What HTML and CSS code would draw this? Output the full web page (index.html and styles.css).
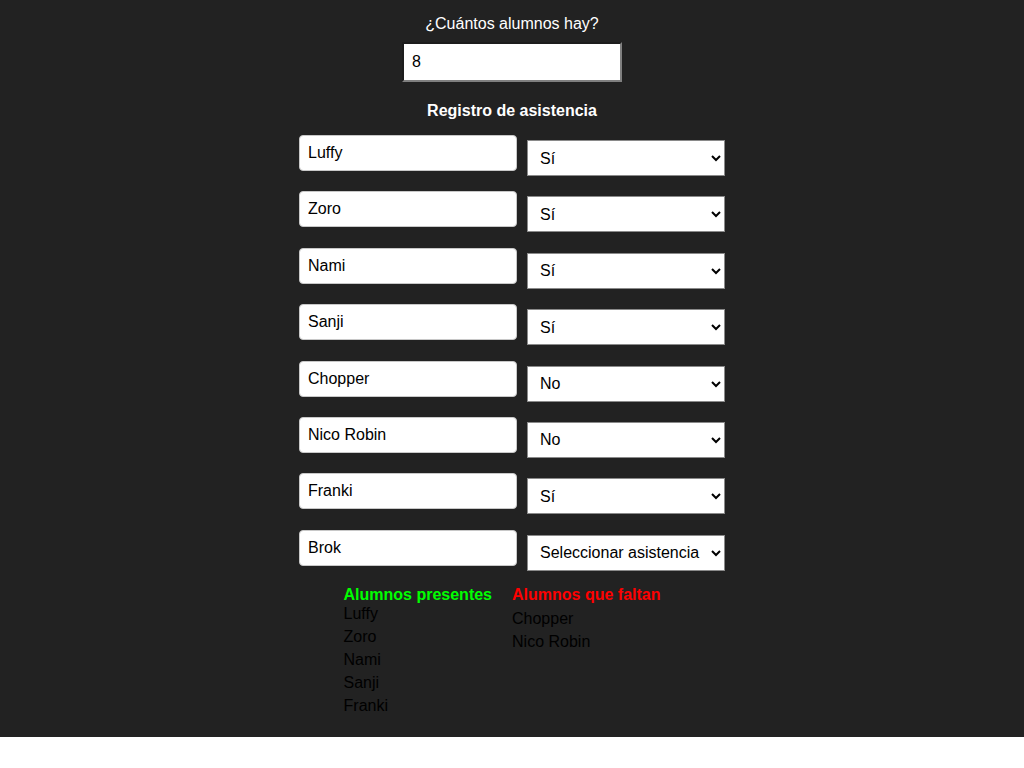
FILE: index.html
```html
<!DOCTYPE html>
<html lang="es">
<head>
<meta charset="utf-8">
<title>Registro de asistencia</title>
<link rel="stylesheet" href="styles.css">
</head>
<body>
<div class="app">
  <p class="question">¿Cuántos alumnos hay?</p>
  <input class="count" type="number" value="8">
  <h2 class="title">Registro de asistencia</h2>
  <div class="rows">
    <div class="row"><input class="name" type="text" value="Luffy"><select class="att"><option>Seleccionar asistencia</option><option selected>Sí</option><option>No</option></select></div>
    <div class="row"><input class="name" type="text" value="Zoro"><select class="att"><option>Seleccionar asistencia</option><option selected>Sí</option><option>No</option></select></div>
    <div class="row"><input class="name" type="text" value="Nami"><select class="att"><option>Seleccionar asistencia</option><option selected>Sí</option><option>No</option></select></div>
    <div class="row"><input class="name" type="text" value="Sanji"><select class="att"><option>Seleccionar asistencia</option><option selected>Sí</option><option>No</option></select></div>
    <div class="row"><input class="name" type="text" value="Chopper"><select class="att"><option>Seleccionar asistencia</option><option>Sí</option><option selected>No</option></select></div>
    <div class="row"><input class="name" type="text" value="Nico Robin"><select class="att"><option>Seleccionar asistencia</option><option>Sí</option><option selected>No</option></select></div>
    <div class="row"><input class="name" type="text" value="Franki"><select class="att"><option>Seleccionar asistencia</option><option selected>Sí</option><option>No</option></select></div>
    <div class="row"><input class="name" type="text" value="Brok"><select class="att"><option selected>Seleccionar asistencia</option><option>Sí</option><option>No</option></select></div>
  </div>
  <div class="lists">
    <div class="col present">
      <h3 class="col-title">Alumnos presentes</h3>
      <ul class="items">
        <li>Luffy</li>
        <li>Zoro</li>
        <li>Nami</li>
        <li>Sanji</li>
        <li>Franki</li>
      </ul>
    </div>
    <div class="col absent">
      <h3 class="col-title">Alumnos que faltan</h3>
      <ul class="items">
        <li>Chopper</li>
        <li>Nico Robin</li>
      </ul>
    </div>
  </div>
</div>
</body>
</html>
```

FILE: styles.css
```css
html {
  background: #ffffff;
}
body {
  margin: 0;
  background: #222222;
  font-family: "Liberation Sans", Arial, sans-serif;
  font-size: 16px;
  color: #ffffff;
}
.app {
  display: flex;
  flex-direction: column;
  align-items: center;
  padding: 15px 0 20px;
}
.question {
  margin: 0;
  line-height: 18px;
}
.count {
  box-sizing: border-box;
  margin-top: 9px;
  width: 220px;
  height: 40px;
  padding: 0 8px;
  background: #ffffff;
  color: #000000;
  font-family: "Liberation Sans", Arial, sans-serif;
  font-size: 16px;
  border-style: solid;
  border-width: 2px;
  border-color: #1c1c1c #808080 #808080 #1c1c1c;
  outline: none;
}
.title {
  margin: 20px 0 0;
  font-size: 16px;
  line-height: 18px;
  font-weight: bold;
}
.rows {
  margin-top: 15px;
  display: flex;
  flex-direction: column;
  gap: 15.4px;
}
.row {
  display: flex;
  align-items: flex-start;
  gap: 10px;
}
.name {
  box-sizing: border-box;
  width: 218px;
  height: 36px;
  padding: 0 8px;
  border: 1px solid #c8c8c8;
  border-radius: 4px;
  background: #ffffff;
  color: #000000;
  font-family: "Liberation Sans", Arial, sans-serif;
  font-size: 16px;
  outline: none;
}
.att {
  box-sizing: border-box;
  margin-top: 5px;
  width: 198px;
  height: 36px;
  padding: 0 4px 0 8px;
  border: 1px solid #8a8a8a;
  border-radius: 0;
  background-color: #ffffff;
  color: #000000;
  font-family: "Liberation Sans", Arial, sans-serif;
  font-size: 16px;
}
.lists {
  margin-top: 15px;
  display: flex;
  gap: 20px;
  padding-right: 20px;
}
.col-title {
  margin: 0;
  font-size: 16px;
  line-height: 18px;
  font-weight: bold;
}
.present .col-title {
  color: #00ff00;
}
.absent .col-title {
  color: #ff0000;
}
.items {
  list-style: none;
  margin: -2px 0 0;
  padding: 0;
  color: #000000;
  line-height: 23px;
}
.absent .items {
  margin-top: 3px;
}
```
